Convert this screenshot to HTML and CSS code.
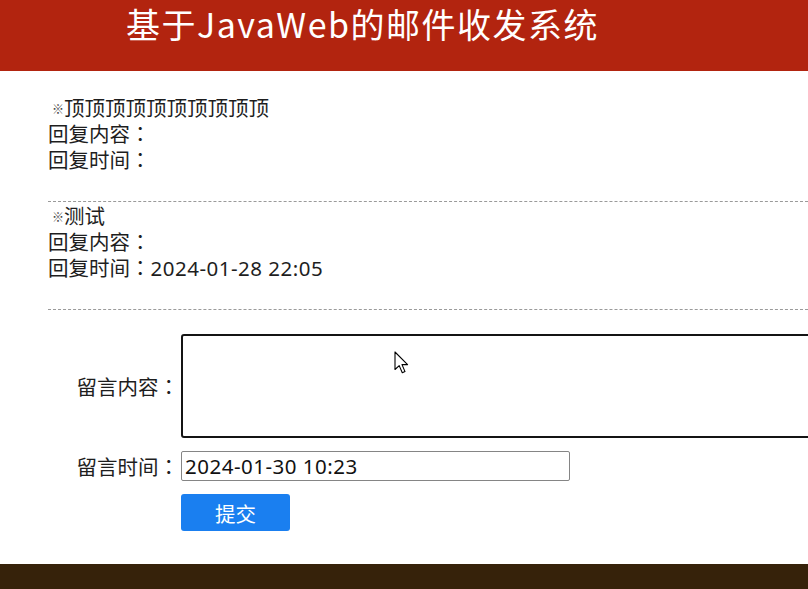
FILE: index.html
```html
<!DOCTYPE html>
<html lang="zh-CN">
<head>
<meta charset="utf-8">
<title>基于JavaWeb的邮件收发系统</title>
<link rel="stylesheet" href="styles.css">
</head>
<body>
<header class="top">
  <h1 class="title">基于JavaWeb的邮件收发系统</h1>
</header>
<main class="main">
  <section class="item">
    <div class="row item-title"><span class="mark">※</span>顶顶顶顶顶顶顶顶顶顶</div>
    <div class="row">回复内容<span class="colon" lang="ja">：</span></div>
    <div class="row">回复时间<span class="colon" lang="ja">：</span></div>
  </section>
  <section class="item">
    <div class="row item-title"><span class="mark">※</span>测试</div>
    <div class="row">回复内容<span class="colon" lang="ja">：</span></div>
    <div class="row">回复时间<span class="colon" lang="ja">：</span><span class="num">2024-01-28 22:05</span></div>
  </section>
  <form class="form">
    <label class="label" for="content">留言内容<span class="colon" lang="ja">：</span></label>
    <textarea id="content" class="area"></textarea>
    <label class="label" for="time">留言时间<span class="colon" lang="ja">：</span></label>
    <input id="time" class="field" type="text" value="2024-01-30 10:23">
    <span></span>
    <button class="btn" type="button">提交</button>
  </form>
</main>
<footer class="foot"></footer>
<svg class="cursor" width="15" height="24" viewBox="0 0 15 24">
  <path d="M1 1 L1 18.5 L5.2 14.6 L8.3 21.8 L11 20.6 L8 13.6 L13.6 13.6 Z" fill="#fff" stroke="#000" stroke-width="1.1" stroke-linejoin="round"/>
</svg>
</body>
</html>
```
FILE: styles.css
```css
html, body {
  margin: 0;
  padding: 0;
  overflow: hidden;
  height: 100%;
  background: #fff;
}
body {
  font-family: "Noto Sans CJK SC", "Noto Sans", sans-serif;
  color: #1e1e1e;
  position: relative;
}
.top {
  height: 71px;
  background: #b2240f;
  box-sizing: border-box;
  padding: 4px 0 0 126px;
}
.title {
  margin: 0;
  font-size: 34px;
  font-weight: normal;
  line-height: 40px;
  color: #fff;
  letter-spacing: 1.5px;
  white-space: nowrap;
}
.main {
  padding: 23px 0 33px 48px;
}
.item {
  border-bottom: 1px dashed #9a9a9a;
  padding-bottom: 29px;
}
.row {
  font-size: 20.5px;
  line-height: 26px;
  height: 26px;
  white-space: nowrap;
}
.colon {
  font-family: "Noto Sans CJK JP", "Noto Sans CJK SC", sans-serif;
}
.num {
  font-family: "Noto Sans", sans-serif;
  letter-spacing: 0.5px;
}
.item-title {
  padding-left: 4px;
}
.mark {
  font-size: 12px;
  color: #444;
  vertical-align: 2px;
}
.form {
  margin-top: 24px;
  display: grid;
  grid-template-columns: 133px 700px;
  row-gap: 13px;
  align-items: center;
}
.label {
  font-size: 20.5px;
  line-height: 26px;
  white-space: nowrap;
  justify-self: end;
  padding-right: 2px;
}
.area {
  box-sizing: border-box;
  height: 104px;
  width: 700px;
  border: 2px solid #141414;
  border-radius: 3px;
  resize: none;
  margin: 0;
}
.field {
  box-sizing: border-box;
  width: 389px;
  height: 30px;
  border: 1px solid #858585;
  border-radius: 2px;
  padding: 0 3px;
  margin: 0;
  font-family: "Noto Sans", "Noto Sans CJK SC", sans-serif;
  font-size: 20.5px;
  letter-spacing: 0.5px;
  color: #111;
}
.btn {
  width: 109px;
  height: 37px;
  background: #1a7ff0;
  border: none;
  border-radius: 3px;
  color: #fff;
  font-family: "Noto Sans CJK SC", sans-serif;
  font-size: 20.5px;
  padding: 0;
}
.foot {
  height: 40px;
  background: #36220a;
}
.cursor {
  position: absolute;
  left: 394px;
  top: 351px;
}
```
